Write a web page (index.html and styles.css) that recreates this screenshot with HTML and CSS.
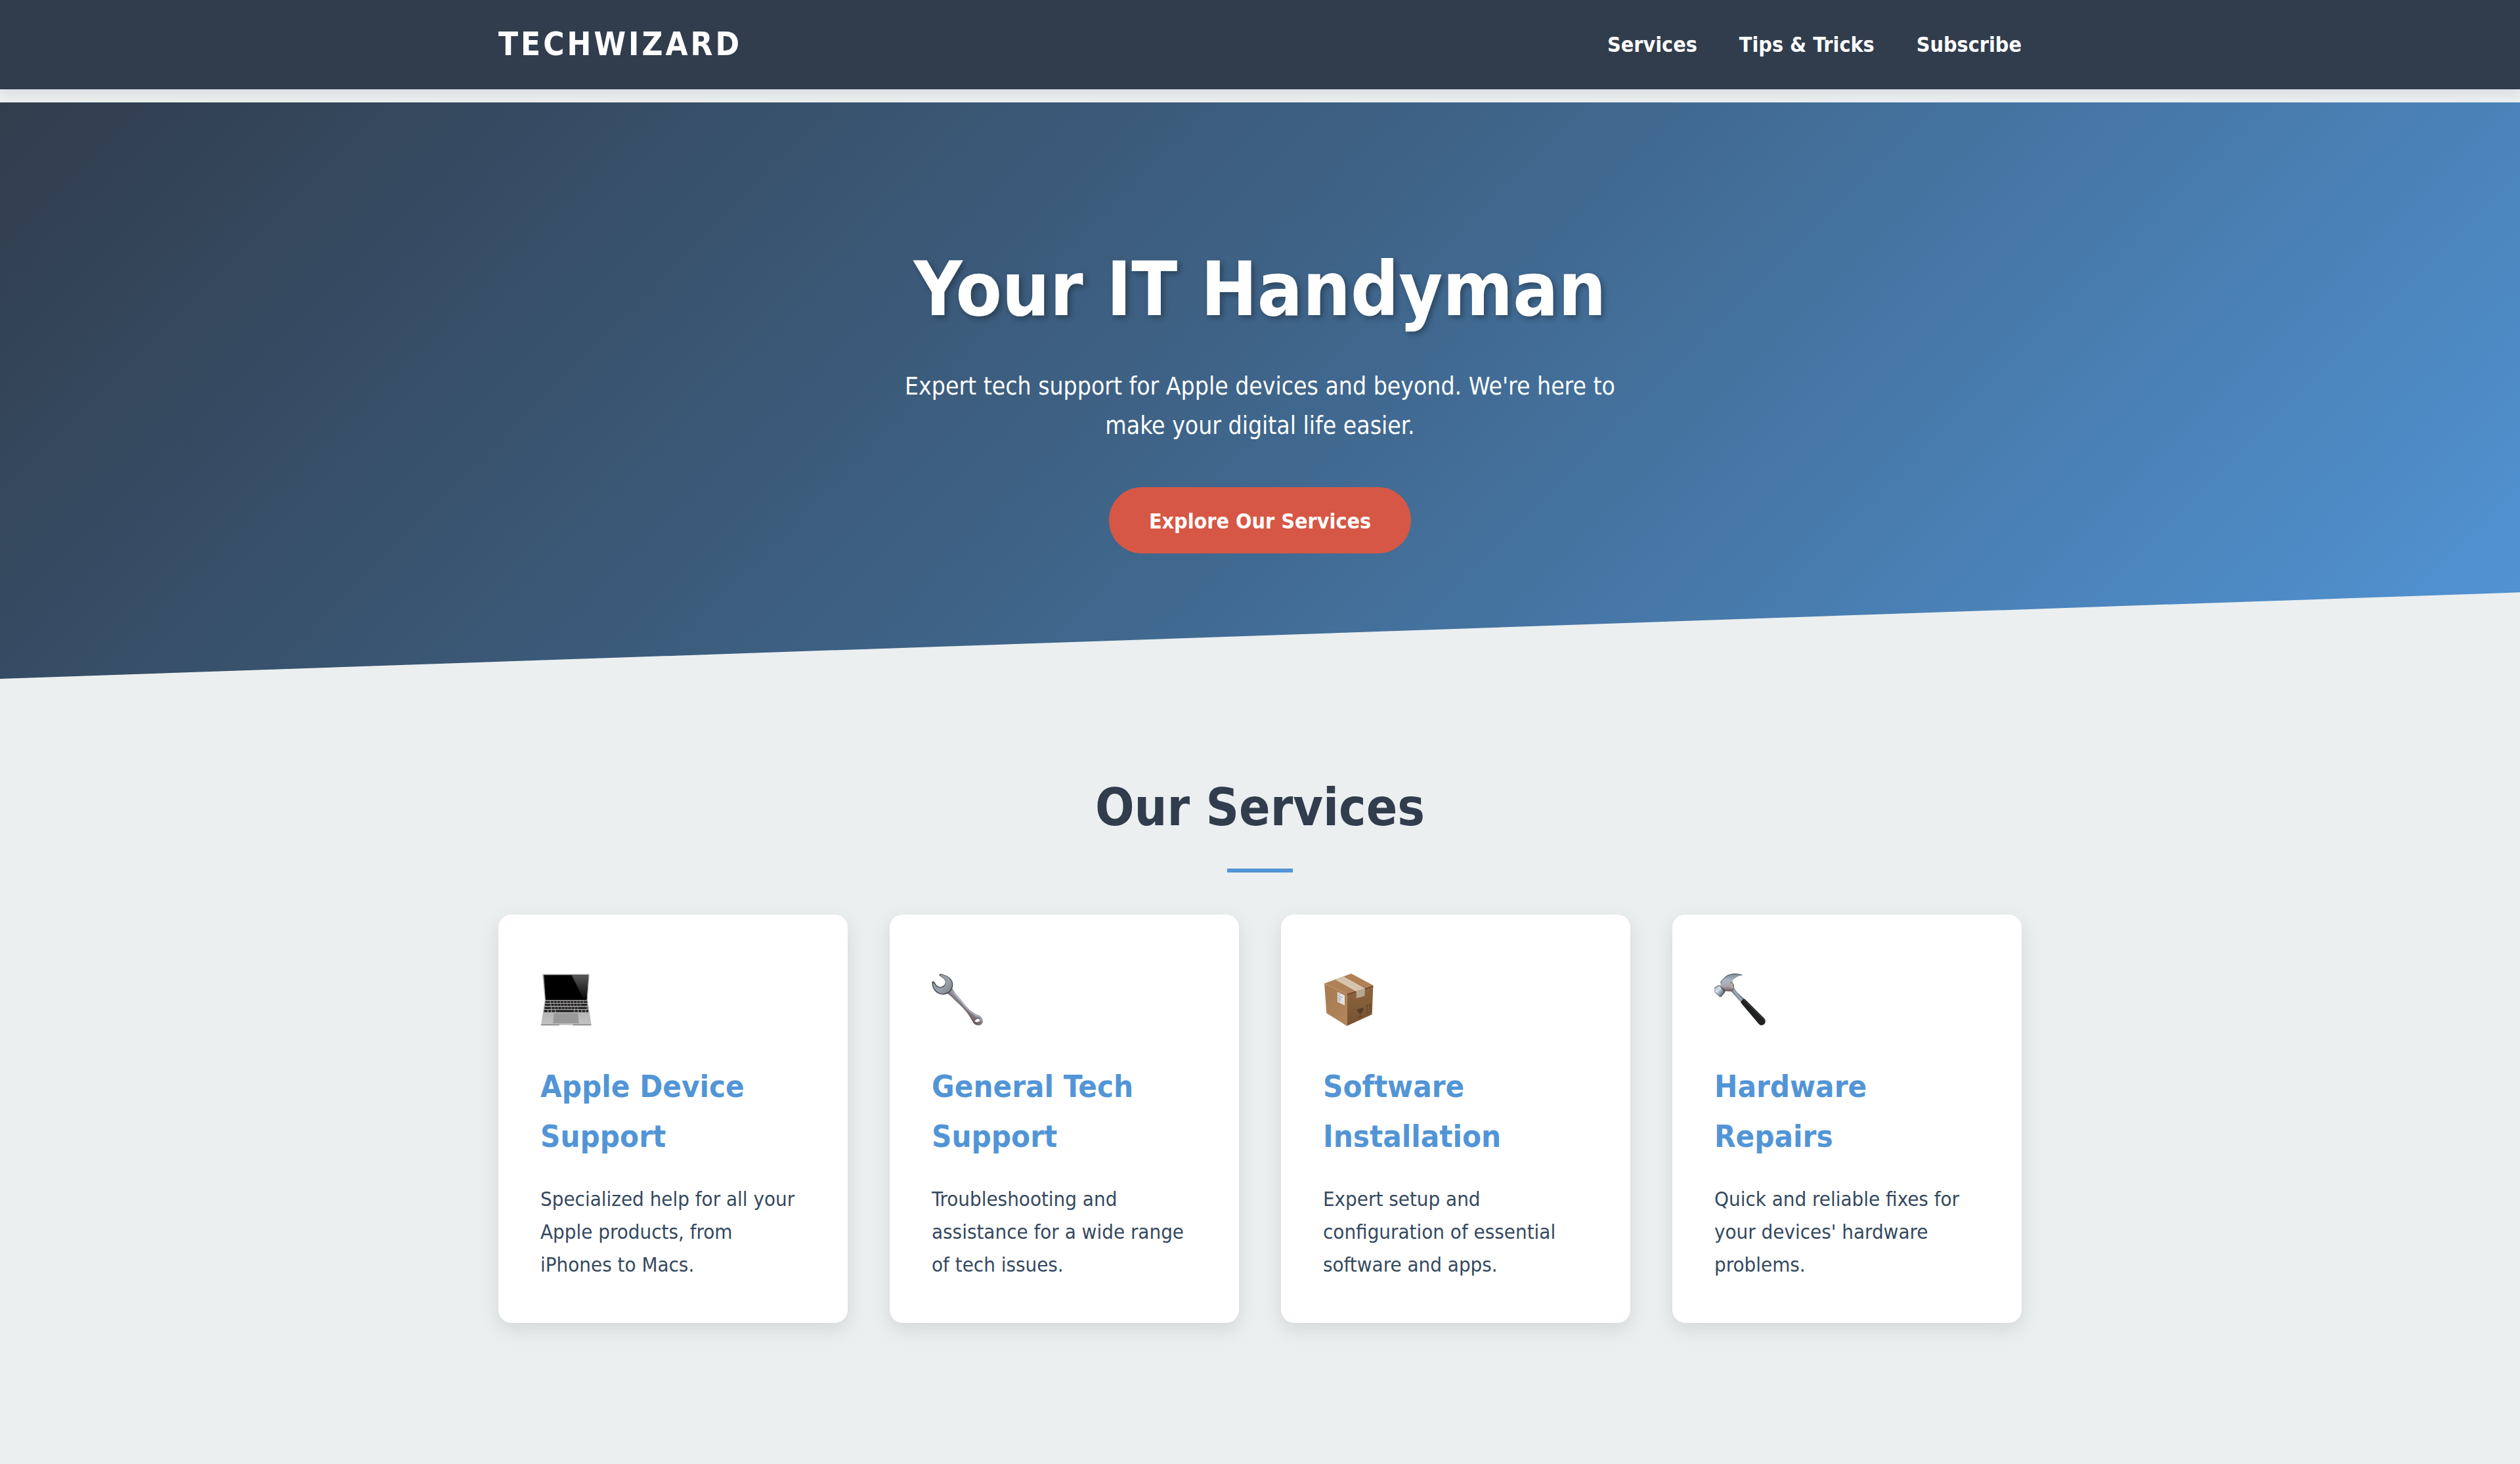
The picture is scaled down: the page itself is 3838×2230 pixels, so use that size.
FILE: index.html
```html
<!DOCTYPE html>
<html lang="en">
<head>
  <meta charset="utf-8">
  <meta name="viewport" content="width=device-width, initial-scale=1">
  <title>TechWizard - Your IT Handyman</title>
  <link rel="stylesheet" href="styles.css">
</head>
<body>
  <header class="site-header">
    <div class="container header-row">
      <div class="logo">TECHWIZARD</div>
      <nav class="nav">
        <a href="#services">Services</a>
        <a href="#tips">Tips &amp; Tricks</a>
        <a href="#subscribe">Subscribe</a>
      </nav>
    </div>
  </header>

  <main>
    <section class="hero">
      <h1 class="hero-title">Your IT Handyman</h1>
      <p class="hero-text">Expert tech support for Apple devices and beyond. We're here to make your digital life easier.</p>
      <a class="cta" href="#services">Explore Our Services</a>
    </section>

    <section class="services container" id="services">
      <h2 class="section-title">Our Services</h2>
      <div class="cards">
        <article class="card">
          <svg class="icon" viewBox="69 69 240 240" aria-hidden="true">
            <defs>
              <linearGradient id="lapBody" x1="0" y1="0" x2="0" y2="1"><stop offset="0" stop-color="#a9a9a9"/><stop offset="1" stop-color="#c4c4c4"/></linearGradient>
              <linearGradient id="lapGlare" x1="0" y1="0" x2="0" y2="1"><stop offset="0" stop-color="#575757"/><stop offset="1" stop-color="#050505"/></linearGradient>
            </defs>
            <path d="M82 71H290Q293 71 293 74L284 193H90L79 74Q79 71 82 71Z" fill="#a3a5a4"/>
            <path d="M85 76H288L280 190H93Z" fill="#000"/>
            <path d="M212 76H288L280 190H268Z" fill="url(#lapGlare)"/>
            <path d="M89 192H285L302 302Q302 306 298 306H222L216 302H156L152 306H76Q72 306 72 302Z" fill="url(#lapBody)"/>
            <path d="M72 301H156L160 302H214L218 301H302Q302 306 298 306H222L216 304H156L152 306H76Q72 306 72 302Z" fill="#8b8b8b"/>
            <g stroke="#232120" fill="none">
              <path d="M92 199H283" stroke-width="9" stroke-dasharray="21 3 13 2 13 2 13 2 13 2 13 2 13 2 13 2 13 2 13 2 13 2"/>
              <path d="M90 212H285" stroke-width="10" stroke-dasharray="25 3 13 2 13 2 13 2 13 2 13 2 13 2 13 2 13 2 13 2 30 2"/>
              <path d="M88 226H286" stroke-width="10" stroke-dasharray="30 3 13 2 13 2 13 2 13 2 13 2 13 2 13 2 13 2 40 2"/>
              <path d="M86 240H288" stroke-width="11" stroke-dasharray="16 3 13 3 15 3 84 3 14 3 14 3 14 3"/>
            </g>
            <path d="M131 250H241L245 296H127Z" fill="#999"/>
          </svg>
          <h3 class="card-title">Apple Device Support</h3>
          <p class="card-text">Specialized help for all your Apple products, from iPhones to Macs.</p>
        </article>

        <article class="card">
          <svg class="icon" viewBox="69 69 240 240" aria-hidden="true">
            <defs>
              <linearGradient id="wrHandle" gradientUnits="userSpaceOnUse" x1="196" y1="238" x2="232" y2="200"><stop offset="0" stop-color="#594d50"/><stop offset=".5" stop-color="#85797d"/><stop offset=".8" stop-color="#9fa6b2"/><stop offset="1" stop-color="#636970"/></linearGradient>
              <linearGradient id="wrHead" x1="0" y1="0" x2="1" y2="1"><stop offset="0" stop-color="#93a0ab"/><stop offset=".6" stop-color="#98a0aa"/><stop offset="1" stop-color="#7c8087"/></linearGradient>
            </defs>
            <path fill-rule="evenodd" d="M138 158L164 138C174 158 192 174 212 200C232 227 252 244 275 256C293 262 303 274 303 287C302 301 288 308 272 304C262 300 257 291 251 280C230 242 208 222 186 201C168 184 154 168 138 158ZM278 272C270 272 264 279 265 286C268 293 283 291 288 284C291 277 286 272 278 272Z" fill="url(#wrHandle)"/>
            <path d="M107 70C141 75 168 95 166 122C165 148 143 166 117 165C87 162 69 136 70 107C74 101 81 104 85 113C93 127 103 132 114 129C129 125 135 111 129 100C123 88 109 84 103 76Z" fill="#41464b"/>
            <path d="M112 73C143 79 164 99 162 122C160 145 140 161 116 161C92 158 74 136 74 112C79 111 82 118 87 124C99 138 120 136 129 124C139 109 130 92 112 82C107 78 108 73 112 73Z" fill="url(#wrHead)"/>
            <path d="M172 159C190 180 211 205 225 224C240 240 257 253 276 262" fill="none" stroke="#b4c0cd" stroke-width="4" stroke-linecap="round"/>
            <path d="M265 284C268 274 284 268 289 278" fill="none" stroke="#4b464a" stroke-width="4"/>
          </svg>
          <h3 class="card-title">General Tech Support</h3>
          <p class="card-text">Troubleshooting and assistance for a wide range of tech issues.</p>
        </article>

        <article class="card">
          <svg class="icon" viewBox="75 69 240 240" aria-hidden="true">
            <defs>
              <linearGradient id="boxLeft" x1="0" y1="0" x2="1" y2="1"><stop offset="0" stop-color="#a77b52"/><stop offset="1" stop-color="#b2855a"/></linearGradient>
              <linearGradient id="boxRight" x1="0" y1="0" x2="0" y2="1"><stop offset="0" stop-color="#8e653e"/><stop offset="1" stop-color="#765231"/></linearGradient>
            </defs>
            <path d="M81 114L204 69L305 123L184 161Z" fill="#b08156"/>
            <path d="M81 114L184 161V308L91 250Z" fill="url(#boxLeft)"/>
            <path d="M184 161L304 124L299 256L184 308Z" fill="url(#boxRight)"/>
            <path d="M184 161L304 124L304 130L184 167Z" fill="#6f4828"/>
            <path d="M81 113L184 159V164L82 118Z" fill="#bd8f63"/>
            <path d="M184 166V308" stroke="#b88759" stroke-width="2"/>
            <path d="M130 96L168 82L267 137L227 151Z" fill="#d8c5b0"/>
            <path d="M152 88L250 143" stroke="#c5b39f" stroke-width="2"/>
            <path d="M227 151L267 137L265 172L227 182Z" fill="#b9a68f"/>
            <path d="M141 153L174 169V214L141 198Z" fill="#e6e7e8"/>
            <path d="M144 161L153 165M144 169L165 179M144 177L156 183M144 184L156 190M144 191L154 196" stroke="#8f8f91" stroke-width="3"/>
            <path d="M159 190L170 195M159 198L170 203" stroke="#bcbcbe" stroke-width="2"/>
            <path d="M231 232L259 224C260 239 255 248 247 250V263L254 262V265L236 270V266L243 264V251C236 250 231 244 231 232Z" fill="#573d25"/>
            <path d="M272 250L296 242M277 244V214M290 240V210M273 222L277 212L281 219M286 217L290 207L294 213" fill="none" stroke="#5e4328" stroke-width="3"/>
          </svg>
          <h3 class="card-title">Software Installation</h3>
          <p class="card-text">Expert setup and configuration of essential software and apps.</p>
        </article>

        <article class="card">
          <svg class="icon" viewBox="75 69 240 240" aria-hidden="true">
            <defs>
              <linearGradient id="hmHead" x1="0" y1="0" x2="0" y2="1"><stop offset="0" stop-color="#7d8893"/><stop offset=".35" stop-color="#adb6c4"/><stop offset=".7" stop-color="#a9a7ae"/><stop offset="1" stop-color="#685254"/></linearGradient>
              <linearGradient id="hmNeck" gradientUnits="userSpaceOnUse" x1="168" y1="176" x2="190" y2="158"><stop offset="0" stop-color="#493f41"/><stop offset=".5" stop-color="#a5b3c5"/><stop offset="1" stop-color="#59606a"/></linearGradient>
              <linearGradient id="hmFace" x1="0" y1="0" x2="1" y2="1"><stop offset="0" stop-color="#6f8298"/><stop offset=".4" stop-color="#dce5ee"/><stop offset=".7" stop-color="#82919f"/><stop offset="1" stop-color="#4c3f41"/></linearGradient>
            </defs>
            <path d="M148 146L164 132C172 150 190 164 212 185L197 200C181 184 166 164 148 146Z" fill="url(#hmNeck)"/>
            <path d="M196 197L209 184Q213 184 218 189L302 272C316 289 304 307 287 305Q282 304 278 299L200 207Q195 201 196 197Z" fill="#202122"/>
            <path d="M212 190L300 277" stroke="#3a3b3c" stroke-width="4" stroke-linecap="round"/>
            <path d="M202 76C172 66 138 69 119 90C110 100 105 103 104 113L102 128L122 151C134 146 147 155 160 148C168 140 166 128 163 119C158 109 156 105 162 97C173 85 187 80 202 76Z" fill="url(#hmHead)"/>
            <path d="M202 76C172 66 138 69 119 90C110 100 105 103 104 113" fill="none" stroke="#3d474d" stroke-width="3"/>
            <path d="M148 110C157 107 165 119 162 133C158 141 151 135 147 126Z" fill="#b7aa9b"/>
            <path d="M148 110C157 107 165 119 162 133" fill="none" stroke="#5b4b45" stroke-width="3"/>
            <path d="M96 122C104 125 108 131 125 146L122 158L108 160Z" fill="#55484b"/>
            <path d="M74 136L94 123Q103 124 109 137Q118 145 119 158L107 174Q101 176 94 170L75 151Q70 143 74 136Z" fill="url(#hmFace)"/>
            <path d="M74 136L94 123Q103 124 109 137Q118 145 119 158L107 174Q101 176 94 170L75 151Q70 143 74 136Z" fill="none" stroke="#5c6269" stroke-width="3"/>
          </svg>
          <h3 class="card-title">Hardware Repairs</h3>
          <p class="card-text">Quick and reliable fixes for your devices' hardware problems.</p>
        </article>
      </div>
    </section>
  </main>
</body>
</html>
```
FILE: styles.css
```css
:root {
  --dark: #313d4d;
  --blue: #5295d6;
  --red: #d65745;
  --page: #ebeff0;
}

* {
  box-sizing: border-box;
  margin: 0;
  padding: 0;
}

body {
  background: var(--page);
  color: #34495e;
  font-family: "DejaVu Sans Condensed", Tahoma, Verdana, sans-serif;
  font-size: 31px;
  line-height: 50px;
}

a {
  color: #fff;
  font-size: 32px;
  font-weight: bold;
  text-decoration: none;
}

.container {
  max-width: 2320px;
  margin: 0 auto;
}

.site-header {
  background: var(--dark);
  box-shadow: 0 4px 20px rgba(0, 0, 0, 0.1);
}

.header-row {
  display: flex;
  align-items: center;
  justify-content: space-between;
  min-height: 136px;
}

.logo {
  color: #fff;
  font-size: 49px;
  font-weight: bold;
  letter-spacing: 4px;
}

.nav {
  display: flex;
  gap: 64px;
}

.hero {
  display: flex;
  flex-direction: column;
  align-items: center;
  margin-top: 20px;
  padding: 195px 32px 191px;
  background: linear-gradient(135deg, #313d4d, #3f658a 50%, #5295d6);
  clip-path: polygon(0 0, 100% 0, 100% 85%, 0 100%);
  color: #fff;
  text-align: center;
}

.hero-title {
  margin-bottom: 28px;
  font-size: 114px;
  line-height: 180px;
  text-shadow: 4px 4px 8px rgba(0, 0, 0, 0.3);
}

.hero-text {
  max-width: 1160px;
  margin-bottom: 63px;
  font-size: 37px;
  line-height: 60px;
}

.cta {
  padding: 27px 61px 24px;
  border-radius: 50px;
  background: var(--red);
}

.services {
  padding: 132px 0 128px;
}

.section-title {
  display: flex;
  flex-direction: column;
  align-items: center;
  gap: 29px;
  margin-bottom: 64px;
  color: var(--dark);
  font-size: 78px;
  line-height: 128px;
}

.section-title::after {
  content: "";
  width: 100px;
  height: 6px;
  background: var(--blue);
}

.cards {
  display: grid;
  grid-template-columns: repeat(auto-fit, minmax(500px, 1fr));
  gap: 64px;
}

.card {
  padding: 90px 64px 64px;
  border-radius: 20px;
  background: #fff;
  box-shadow: 0 10px 30px rgba(0, 0, 0, 0.1);
}

.icon {
  display: block;
  width: 80px;
  height: 80px;
  margin-bottom: 54px;
}

.card-title {
  margin-bottom: 32px;
  color: var(--blue);
  font-size: 47px;
  line-height: 76px;
}
```
